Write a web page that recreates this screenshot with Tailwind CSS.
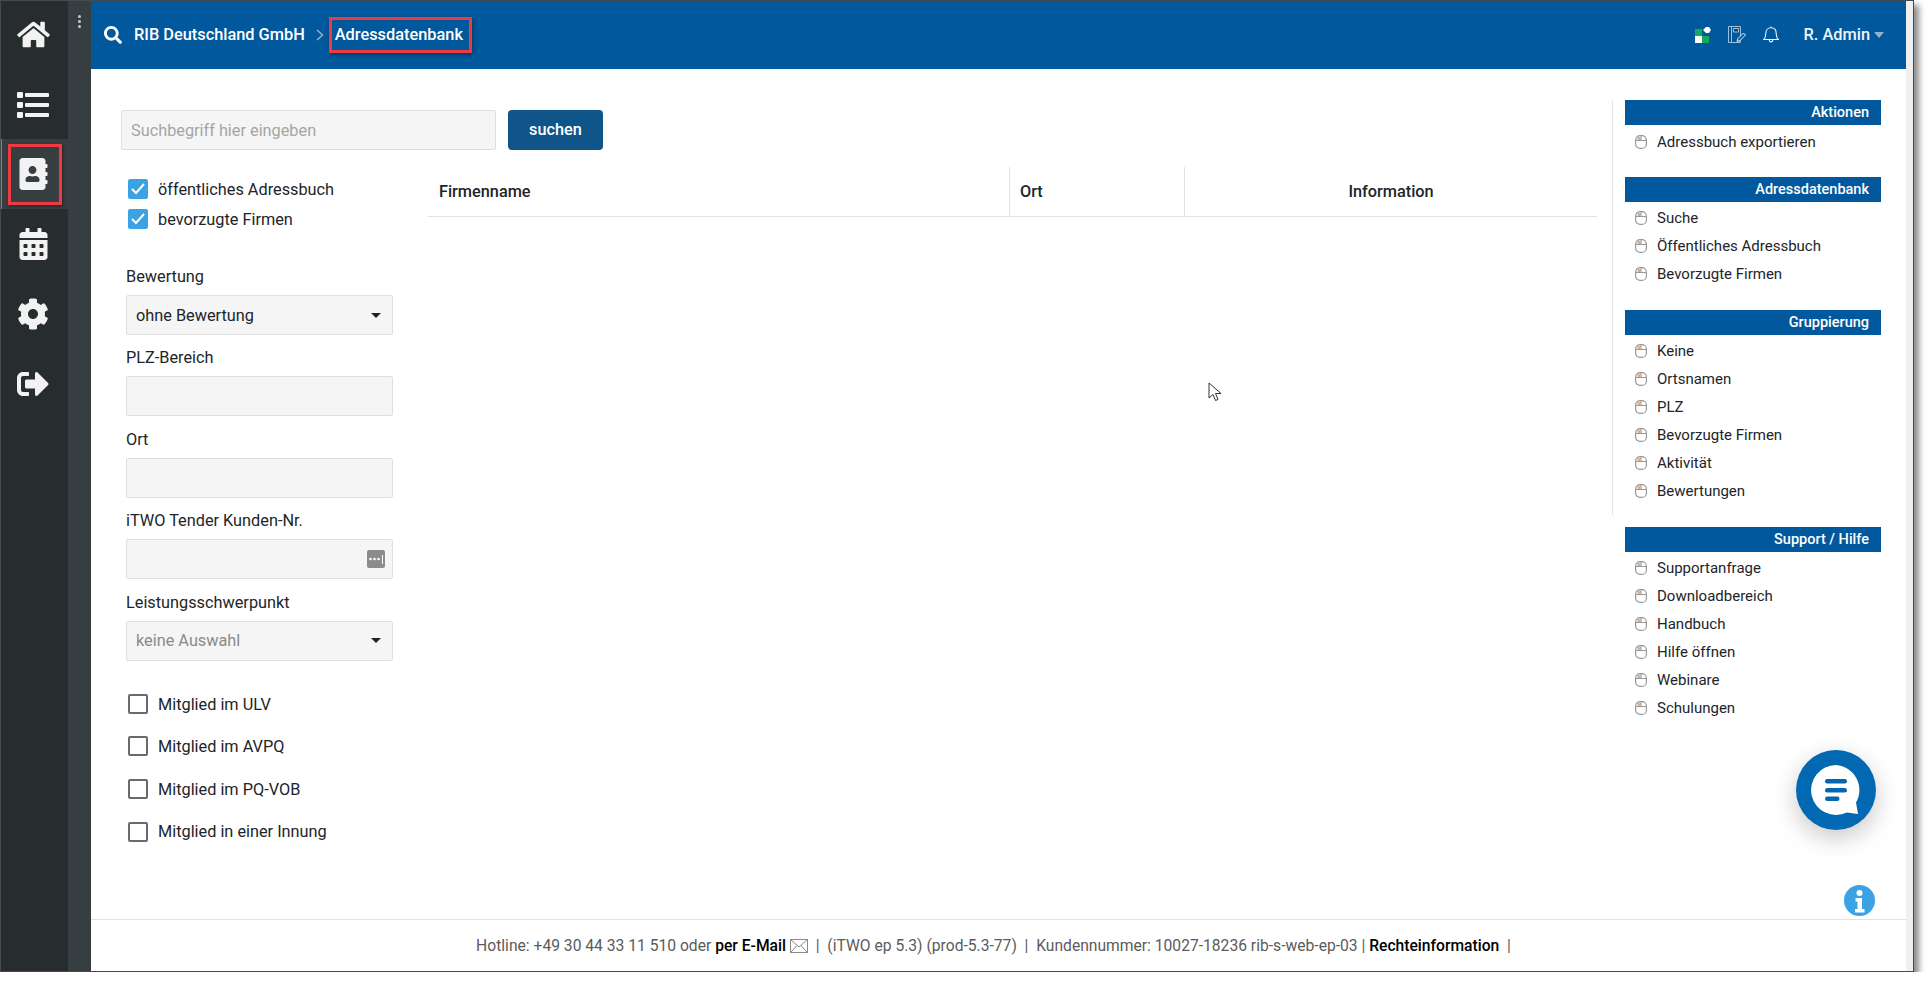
<!DOCTYPE html>
<html lang="de">
<head>
<meta charset="utf-8">
<script src="https://cdn.jsdelivr.net/npm/@tailwindcss/browser@4"></script>
<title>Adressdatenbank</title>
</head>
<body class="bg-white font-['Roboto',sans-serif] text-[#212529] overflow-hidden">
<div class="relative flex w-[1914px] h-[972px] border border-[#444a4d] shadow-[5px_5px_6px_rgba(0,0,0,0.45)]">

  <aside class="w-[67px] shrink-0 bg-[#272c2e] flex flex-col text-[#f2f2f2]">
    <div class="h-[69px] flex items-center justify-center pr-[3px] pb-[2px]">
      <svg class="w-[33px] h-[29px]" viewBox="0 0 576 512" fill="currentColor"><path d="M280.37 148.26L96 300.11V464a16 16 0 0 0 16 16l112.06-.29a16 16 0 0 0 15.92-16V368a16 16 0 0 1 16-16h64a16 16 0 0 1 16 16v95.64a16 16 0 0 0 16 16.05L464 480a16 16 0 0 0 16-16V300L295.67 148.26a12.19 12.19 0 0 0-15.3 0zM571.6 251.47L488 182.56V44.05a12 12 0 0 0-12-12h-56a12 12 0 0 0-12 12v72.61L318.47 43a48 48 0 0 0-61 0L4.34 251.47a12 12 0 0 0-1.6 16.9l25.5 31A12 12 0 0 0 45.15 301l235.22-193.74a12.19 12.19 0 0 1 15.3 0L530.9 301a12 12 0 0 0 16.9-1.6l25.5-31a12 12 0 0 0-1.7-16.93z"/></svg>
    </div>
    <div class="h-[69px] flex items-center justify-center pr-[3px]">
      <svg class="w-[32px] h-[26px]" viewBox="0 0 32 26" fill="currentColor"><rect x="0" y="0" width="6" height="6" rx="1"/><rect x="8" y="1" width="24" height="4" rx="1"/><rect x="0" y="10" width="6" height="6" rx="1"/><rect x="8" y="11" width="24" height="4" rx="1"/><rect x="0" y="20" width="6" height="6" rx="1"/><rect x="8" y="21" width="24" height="4" rx="1"/></svg>
    </div>
    <div class="relative h-[70px] bg-[#373e41] border-l border-[#4a90c4] flex items-center justify-center pr-[3px]">
      <svg class="w-[29px] h-[32px]" viewBox="0 0 448 512" fill="currentColor"><path d="M436 160c6.6 0 12-5.4 12-12v-40c0-6.6-5.4-12-12-12h-20V48c0-26.5-21.5-48-48-48H48C21.5 0 0 21.5 0 48v416c0 26.5 21.5 48 48 48h320c26.5 0 48-21.5 48-48v-48h20c6.6 0 12-5.4 12-12v-40c0-6.6-5.4-12-12-12h-20v-64h20c6.6 0 12-5.4 12-12v-40c0-6.6-5.4-12-12-12h-20v-64h20zm-228-32c35.3 0 64 28.7 64 64s-28.7 64-64 64-64-28.7-64-64 28.7-64 64-64zm112 236.8c0 10.6-10 19.2-22.4 19.2H118.4C106 384 96 375.4 96 364.8v-19.2c0-31.8 30.1-57.6 67.2-57.6h5c12.3 5.1 25.7 8 39.8 8s27.6-2.9 39.8-8h5c37.1 0 67.2 25.8 67.2 57.6v19.2z"/></svg>
      <div class="absolute left-[6px] top-[5px] w-[54px] h-[61px] border-[3px] border-[#f03a41] shadow-[1px_1px_3px_rgba(0,0,0,0.4)]"></div>
    </div>
    <div class="h-[70px] flex items-center justify-center pr-[2px]">
      <svg class="w-[29px] h-[32px]" viewBox="0 0 448 512" fill="currentColor"><path d="M0 464c0 26.5 21.5 48 48 48h352c26.5 0 48-21.5 48-48V192H0v272zm320-196c0-6.6 5.4-12 12-12h40c6.6 0 12 5.4 12 12v40c0 6.6-5.4 12-12 12h-40c-6.6 0-12-5.4-12-12v-40zm0 128c0-6.6 5.4-12 12-12h40c6.6 0 12 5.4 12 12v40c0 6.6-5.4 12-12 12h-40c-6.6 0-12-5.4-12-12v-40zM192 268c0-6.6 5.4-12 12-12h40c6.6 0 12 5.4 12 12v40c0 6.6-5.4 12-12 12h-40c-6.6 0-12-5.4-12-12v-40zm0 128c0-6.6 5.4-12 12-12h40c6.6 0 12 5.4 12 12v40c0 6.6-5.4 12-12 12h-40c-6.6 0-12-5.4-12-12v-40zM64 268c0-6.6 5.4-12 12-12h40c6.6 0 12 5.4 12 12v40c0 6.6-5.4 12-12 12H76c-6.6 0-12-5.4-12-12v-40zm0 128c0-6.6 5.4-12 12-12h40c6.6 0 12 5.4 12 12v40c0 6.6-5.4 12-12 12H76c-6.6 0-12-5.4-12-12v-40zM400 64h-48V16c0-8.8-7.2-16-16-16h-32c-8.8 0-16 7.2-16 16v48H160V16c0-8.8-7.2-16-16-16h-32c-8.8 0-16 7.2-16 16v48H48C21.5 64 0 85.5 0 112v48h448v-48c0-26.5-21.5-48-48-48z"/></svg>
    </div>
    <div class="h-[70px] flex items-center justify-center pr-[3px]">
      <svg class="w-[32px] h-[32px]" viewBox="0 0 512 512" fill="currentColor"><path d="M487.4 315.7l-42.6-24.6c4.3-23.2 4.3-47 0-70.2l42.6-24.6c4.9-2.8 7.1-8.6 5.5-14-11.1-35.6-30-67.8-54.7-94.6-3.8-4.1-10-5.1-14.8-2.3L380.8 110c-17.9-15.4-38.5-27.3-60.8-35.1V25.8c0-5.6-3.9-10.5-9.4-11.7-36.7-8.2-74.3-7.8-109.2 0-5.5 1.2-9.4 6.1-9.4 11.7V75c-22.2 7.9-42.8 19.8-60.8 35.1L88.7 85.5c-4.9-2.8-11-1.9-14.8 2.3-24.7 26.7-43.6 58.9-54.7 94.6-1.7 5.4.6 11.2 5.5 14L67.3 221c-4.3 23.2-4.3 47 0 70.2l-42.6 24.6c-4.9 2.8-7.1 8.6-5.5 14 11.1 35.6 30 67.8 54.7 94.6 3.8 4.1 10 5.1 14.8 2.3l42.6-24.6c17.9 15.4 38.5 27.3 60.8 35.1v49.2c0 5.6 3.9 10.5 9.4 11.7 36.7 8.2 74.3 7.8 109.2 0 5.5-1.2 9.4-6.1 9.4-11.7v-49.2c22.2-7.9 42.8-19.8 60.8-35.1l42.6 24.6c4.9 2.8 11 1.9 14.8-2.3 24.7-26.7 43.6-58.9 54.7-94.6 1.5-5.5-.7-11.3-5.6-14.1zM256 336c-44.1 0-80-35.9-80-80s35.9-80 80-80 80 35.9 80 80-35.9 80-80 80z"/></svg>
    </div>
    <div class="h-[70px] flex items-center justify-center pr-[3px]">
      <svg class="w-[32px] h-[32px]" viewBox="0 0 512 512" fill="currentColor"><path d="M497 273L329 441c-15 15-41 4.5-41-17v-96H152c-13.3 0-24-10.7-24-24v-96c0-13.3 10.7-24 24-24h136V88c0-21.4 25.9-32 41-17l168 168c9.3 9.4 9.3 24.6 0 34zM192 436v-40c0-6.6-5.4-12-12-12H96c-17.7 0-32-14.3-32-32V160c0-17.7 14.3-32 32-32h84c6.6 0 12-5.4 12-12V76c0-6.6-5.4-12-12-12H96c-53 0-96 43-96 96v192c0 53 43 96 96 96h84c6.6 0 12-5.4 12-12z"/></svg>
    </div>
    <div class="flex-1"></div>
  </aside>

  <div class="w-[23px] shrink-0 bg-[#373e41] flex flex-col items-center gap-[2px] pt-[14px] pr-[1px]">
    <span class="w-[3px] h-[3px] rounded-full bg-[#c9cccd]"></span>
    <span class="w-[3px] h-[3px] rounded-full bg-[#c9cccd]"></span>
    <span class="w-[3px] h-[3px] rounded-full bg-[#c9cccd]"></span>
  </div>

  <main class="w-[1815px] shrink-0 flex flex-col bg-white">
    <header class="h-[68px] shrink-0 bg-[#02589c] text-white flex items-center pl-[13px] pr-[22px]">
      <svg class="w-[18px] h-[18px]" viewBox="0 0 512 512" fill="currentColor"><path d="M505 442.7L405.3 343c-4.5-4.5-10.6-7-17-7H372c27.6-35.3 44-79.7 44-128C416 93.1 322.9 0 208 0S0 93.1 0 208s93.1 208 208 208c48.3 0 92.7-16.4 128-44v16.3c0 6.4 2.5 12.5 7 17l99.7 99.700c9.4 9.4 24.6 9.4 33.9 0l28.3-28.3c9.4-9.4 9.4-24.6.1-34zM208 336c-70.7 0-128-57.2-128-128 0-70.7 57.2-128 128-128 70.7 0 128 57.2 128 128 0 70.7-57.2 128-128 128z"/></svg>
      <span class="ml-[12px] text-[16.35px] font-medium">RIB Deutschland GmbH</span>
      <svg class="ml-[11px] w-[8px] h-[12px]" viewBox="0 0 8 12" fill="none" stroke="#8fb3d0" stroke-width="1.5"><path d="M1 1l5.5 5L1 11"/></svg>
      <span class="ml-[5px] h-[36px] pl-[3px] pr-[6px] flex items-center border-[3px] border-[#f03a41] shadow-[1px_2px_4px_rgba(0,0,0,0.35)] text-[16.35px] font-medium">Adressdatenbank</span>
      <div class="ml-auto flex items-center">
        <svg class="w-[16px] h-[16px]" viewBox="0 0 16 16"><rect x="0" y="2" width="7" height="7" fill="#15a95b"/><rect x="7" y="9" width="7" height="7" fill="#15a95b"/><rect x="0" y="9" width="7" height="7" fill="#fff"/><path d="M8 3l3-3h3l2 3-2 3h-3z" fill="#fff"/></svg>
        <svg class="ml-[17px] w-[18px] h-[17px]" viewBox="0 0 18 17" fill="none" stroke="#9fc0da" stroke-width="1"><path d="M.5.500h12v16H.5zM3.500.500v16"/><path d="M5.500 2.500h5v3.500h-5z" fill="#0c3f6e"/><path d="M9 15.500l1-3 5.500-5.500 2 2-5.500 5.500z" fill="#02589c" stroke="#e6eef5"/></svg>
        <svg class="ml-[17px] w-[16px] h-[17px]" viewBox="0 0 16 17" fill="none" stroke="#eef4f9" stroke-width="1.100"><path d="M.8 13.500c1.400-1.400 2-2.800 2-6 0-3.500 2.100-5.700 5.200-5.700s5.200 2.200 5.200 5.700c0 3.200.6 4.600 2 6z"/><path d="M8 .5v1.300M6.300 13.700c0 2.900 3.400 2.900 3.400 0"/></svg>
        <span class="ml-[25px] text-[16.35px] font-medium text-[#eef4f9]">R. Admin</span>
        <span class="ml-[4px] mt-[1px] w-0 h-0 border-x-[5.5px] border-x-transparent border-t-[6px] border-t-[#8fb3d0]"></span>
      </div>
    </header>

    <div class="flex-1 flex min-h-0">
      <section class="w-[1521px] shrink-0 pl-[30px] pt-[41px]">
        <div class="flex">
          <div class="w-[375px] h-[40px] bg-[#f5f5f5] border border-[#dfdfdf] rounded-[2px] flex items-center px-[9px] pt-[2px] text-[16.3px] text-[#a5a5a5]">Suchbegriff hier eingeben</div>
          <button class="ml-[12px] w-[95px] h-[40px] bg-[#0f5589] rounded-[4px] text-white text-[16.3px] font-medium">suchen</button>
        </div>
        <div class="flex mt-[17px]">
          <div class="w-[267px] ml-[5px] shrink-0 pt-[7px] text-[16.3px]">
            <label class="h-[30px] flex items-center pl-[2px]">
              <span class="w-[20px] h-[20px] rounded-[2px] bg-[#3ba3e4] flex items-center justify-center"><svg class="w-[14px] h-[12px]" viewBox="0 0 14 12" fill="none" stroke="#fff" stroke-width="2"><path d="M1 6l4 4 8-9"/></svg></span>
              <span class="ml-[10px] pt-[2px]">öffentliches Adressbuch</span>
            </label>
            <label class="h-[30px] flex items-center pl-[2px]">
              <span class="w-[20px] h-[20px] rounded-[2px] bg-[#3ba3e4] flex items-center justify-center"><svg class="w-[14px] h-[12px]" viewBox="0 0 14 12" fill="none" stroke="#fff" stroke-width="2"><path d="M1 6l4 4 8-9"/></svg></span>
              <span class="ml-[10px] pt-[2px]">bevorzugte Firmen</span>
            </label>
            <div class="h-[30px]"></div>
            <div class="h-[81.4px]">
              <div class="h-[24px] leading-[26px] mb-[7px]">Bewertung</div>
              <div class="h-[40px] bg-[#f5f5f5] border border-[#dfdfdf] rounded-[2px] flex items-center justify-between pl-[9px] pr-[11px]"><span class="pt-[2px]">ohne Bewertung</span><span class="w-0 h-0 border-x-[5px] border-x-transparent border-t-[5px] border-t-[#222]"></span></div>
            </div>
            <div class="h-[81.4px]">
              <div class="h-[24px] leading-[26px] mb-[7px]">PLZ-Bereich</div>
              <div class="h-[40px] bg-[#f5f5f5] border border-[#dfdfdf] rounded-[2px]"></div>
            </div>
            <div class="h-[81.4px]">
              <div class="h-[24px] leading-[26px] mb-[7px]">Ort</div>
              <div class="h-[40px] bg-[#f5f5f5] border border-[#dfdfdf] rounded-[2px]"></div>
            </div>
            <div class="h-[81.4px]">
              <div class="h-[24px] leading-[26px] mb-[7px]">iTWO Tender Kunden-Nr.</div>
              <div class="h-[40px] bg-[#f5f5f5] border border-[#dfdfdf] rounded-[2px] flex items-center justify-end pr-[7px]">
                <svg class="w-[18px] h-[18px]" viewBox="0 0 18 18"><rect width="18" height="18" rx="2" fill="#8c8c8c"/><circle cx="3.500" cy="9" r="1.300" fill="#fff"/><circle cx="7.500" cy="9" r="1.300" fill="#fff"/><circle cx="11.500" cy="9" r="1.300" fill="#fff"/><rect x="15" y="5" width="1" height="9" fill="#fff"/></svg>
              </div>
            </div>
            <div>
              <div class="h-[24px] leading-[26px] mb-[7px]">Leistungsschwerpunkt</div>
              <div class="h-[40px] bg-[#f5f5f5] border border-[#dfdfdf] rounded-[2px] flex items-center justify-between pl-[9px] pr-[11px] text-[#8a8a8a]"><span class="pt-[2px]">keine Auswahl</span><span class="w-0 h-0 border-x-[5px] border-x-transparent border-t-[5px] border-t-[#222]"></span></div>
            </div>
            <div class="mt-[22px]">
              <label class="h-[42.6px] flex items-center pl-[2px]"><span class="w-[20px] h-[20px] rounded-[2px] border-2 border-[#6a6a6a]"></span><span class="ml-[10px] pt-[2px]">Mitglied im ULV</span></label>
              <label class="h-[42.6px] flex items-center pl-[2px]"><span class="w-[20px] h-[20px] rounded-[2px] border-2 border-[#6a6a6a]"></span><span class="ml-[10px] pt-[2px]">Mitglied im AVPQ</span></label>
              <label class="h-[42.6px] flex items-center pl-[2px]"><span class="w-[20px] h-[20px] rounded-[2px] border-2 border-[#6a6a6a]"></span><span class="ml-[10px] pt-[2px]">Mitglied im PQ-VOB</span></label>
              <label class="h-[42.6px] flex items-center pl-[2px]"><span class="w-[20px] h-[20px] rounded-[2px] border-2 border-[#6a6a6a]"></span><span class="ml-[10px] pt-[2px]">Mitglied in einer Innung</span></label>
            </div>
          </div>
          <div class="ml-[35px] w-[1169px] shrink-0">
            <div class="h-[50px] flex border-b border-[#e2e2e2] text-[16.3px] font-medium">
              <div class="w-[582px] border-r border-[#e2e2e2] flex items-center pl-[11px] pt-[2px]">Firmenname</div>
              <div class="w-[175px] border-r border-[#e2e2e2] flex items-center pl-[10px] pt-[2px]">Ort</div>
              <div class="flex-1 flex items-center justify-center pt-[2px]">Information</div>
            </div>
          </div>
        </div>
      </section>

      <aside class="w-[270px] shrink-0 pt-[31px] text-[15px]">
        <div class="border-l border-[#e6e6e6] pl-[12px] h-[415px]">
          <div class="w-[256px] h-[25px] bg-[#02589c] text-white text-[14.5px] font-medium flex items-center justify-end pr-[12px]">Aktionen</div>
          <ul class="pt-[3px] mb-[21px]">
            <li class="h-[28px] flex items-center pl-[10px] gap-[10px]"><svg class="w-[12px] h-[14px] shrink-0" viewBox="0 0 12 14"><rect x="2.500" y="2" width="3" height="3" fill="#f3a976"/><rect x=".6" y=".6" width="10.800" height="12.800" rx="4.500" fill="none" stroke="#999" stroke-width="1.200"/><path d="M.6 5.500h10.800M6 .6v4.900" stroke="#999" stroke-width="1"/></svg>Adressbuch exportieren</li>
          </ul>
          <div class="w-[256px] h-[25px] bg-[#02589c] text-white text-[14.5px] font-medium flex items-center justify-end pr-[12px]">Adressdatenbank</div>
          <ul class="pt-[2px] mb-[22px]">
            <li class="h-[28px] flex items-center pl-[10px] gap-[10px]"><svg class="w-[12px] h-[14px] shrink-0" viewBox="0 0 12 14"><rect x="2.500" y="2" width="3" height="3" fill="#f3a976"/><rect x=".6" y=".6" width="10.800" height="12.800" rx="4.500" fill="none" stroke="#999" stroke-width="1.200"/><path d="M.6 5.500h10.800M6 .6v4.900" stroke="#999" stroke-width="1"/></svg>Suche</li>
            <li class="h-[28px] flex items-center pl-[10px] gap-[10px]"><svg class="w-[12px] h-[14px] shrink-0" viewBox="0 0 12 14"><rect x="2.500" y="2" width="3" height="3" fill="#f3a976"/><rect x=".6" y=".6" width="10.800" height="12.800" rx="4.500" fill="none" stroke="#999" stroke-width="1.200"/><path d="M.6 5.500h10.800M6 .6v4.900" stroke="#999" stroke-width="1"/></svg>Öffentliches Adressbuch</li>
            <li class="h-[28px] flex items-center pl-[10px] gap-[10px]"><svg class="w-[12px] h-[14px] shrink-0" viewBox="0 0 12 14"><rect x="2.500" y="2" width="3" height="3" fill="#f3a976"/><rect x=".6" y=".6" width="10.800" height="12.800" rx="4.500" fill="none" stroke="#999" stroke-width="1.200"/><path d="M.6 5.500h10.800M6 .6v4.900" stroke="#999" stroke-width="1"/></svg>Bevorzugte Firmen</li>
          </ul>
          <div class="w-[256px] h-[25px] bg-[#02589c] text-white text-[14.5px] font-medium flex items-center justify-end pr-[12px]">Gruppierung</div>
          <ul class="pt-[2px]">
            <li class="h-[28px] flex items-center pl-[10px] gap-[10px]"><svg class="w-[12px] h-[14px] shrink-0" viewBox="0 0 12 14"><rect x="2.500" y="2" width="3" height="3" fill="#f3a976"/><rect x=".6" y=".6" width="10.800" height="12.800" rx="4.500" fill="none" stroke="#999" stroke-width="1.200"/><path d="M.6 5.500h10.800M6 .6v4.900" stroke="#999" stroke-width="1"/></svg>Keine</li>
            <li class="h-[28px] flex items-center pl-[10px] gap-[10px]"><svg class="w-[12px] h-[14px] shrink-0" viewBox="0 0 12 14"><rect x="2.500" y="2" width="3" height="3" fill="#f3a976"/><rect x=".6" y=".6" width="10.800" height="12.800" rx="4.500" fill="none" stroke="#999" stroke-width="1.200"/><path d="M.6 5.500h10.800M6 .6v4.900" stroke="#999" stroke-width="1"/></svg>Ortsnamen</li>
            <li class="h-[28px] flex items-center pl-[10px] gap-[10px]"><svg class="w-[12px] h-[14px] shrink-0" viewBox="0 0 12 14"><rect x="2.500" y="2" width="3" height="3" fill="#f3a976"/><rect x=".6" y=".6" width="10.800" height="12.800" rx="4.500" fill="none" stroke="#999" stroke-width="1.200"/><path d="M.6 5.500h10.800M6 .6v4.900" stroke="#999" stroke-width="1"/></svg>PLZ</li>
            <li class="h-[28px] flex items-center pl-[10px] gap-[10px]"><svg class="w-[12px] h-[14px] shrink-0" viewBox="0 0 12 14"><rect x="2.500" y="2" width="3" height="3" fill="#f3a976"/><rect x=".6" y=".6" width="10.800" height="12.800" rx="4.500" fill="none" stroke="#999" stroke-width="1.200"/><path d="M.6 5.500h10.800M6 .6v4.900" stroke="#999" stroke-width="1"/></svg>Bevorzugte Firmen</li>
            <li class="h-[28px] flex items-center pl-[10px] gap-[10px]"><svg class="w-[12px] h-[14px] shrink-0" viewBox="0 0 12 14"><rect x="2.500" y="2" width="3" height="3" fill="#f3a976"/><rect x=".6" y=".6" width="10.800" height="12.800" rx="4.500" fill="none" stroke="#999" stroke-width="1.200"/><path d="M.6 5.500h10.800M6 .6v4.900" stroke="#999" stroke-width="1"/></svg>Aktivität</li>
            <li class="h-[28px] flex items-center pl-[10px] gap-[10px]"><svg class="w-[12px] h-[14px] shrink-0" viewBox="0 0 12 14"><rect x="2.500" y="2" width="3" height="3" fill="#f3a976"/><rect x=".6" y=".6" width="10.800" height="12.800" rx="4.500" fill="none" stroke="#999" stroke-width="1.200"/><path d="M.6 5.500h10.800M6 .6v4.900" stroke="#999" stroke-width="1"/></svg>Bewertungen</li>
          </ul>
        </div>
        <div class="ml-[13px] mt-[12px]">
          <div class="w-[256px] h-[25px] bg-[#02589c] text-white text-[14.5px] font-medium flex items-center justify-end pr-[12px]">Support / Hilfe</div>
          <ul class="pt-[2px]">
            <li class="h-[28px] flex items-center pl-[10px] gap-[10px]"><svg class="w-[12px] h-[14px] shrink-0" viewBox="0 0 12 14"><rect x="2.500" y="2" width="3" height="3" fill="#f3a976"/><rect x=".6" y=".6" width="10.800" height="12.800" rx="4.500" fill="none" stroke="#999" stroke-width="1.200"/><path d="M.6 5.500h10.800M6 .6v4.900" stroke="#999" stroke-width="1"/></svg>Supportanfrage</li>
            <li class="h-[28px] flex items-center pl-[10px] gap-[10px]"><svg class="w-[12px] h-[14px] shrink-0" viewBox="0 0 12 14"><rect x="2.500" y="2" width="3" height="3" fill="#f3a976"/><rect x=".6" y=".6" width="10.800" height="12.800" rx="4.500" fill="none" stroke="#999" stroke-width="1.200"/><path d="M.6 5.500h10.800M6 .6v4.900" stroke="#999" stroke-width="1"/></svg>Downloadbereich</li>
            <li class="h-[28px] flex items-center pl-[10px] gap-[10px]"><svg class="w-[12px] h-[14px] shrink-0" viewBox="0 0 12 14"><rect x="2.500" y="2" width="3" height="3" fill="#f3a976"/><rect x=".6" y=".6" width="10.800" height="12.800" rx="4.500" fill="none" stroke="#999" stroke-width="1.200"/><path d="M.6 5.500h10.800M6 .6v4.900" stroke="#999" stroke-width="1"/></svg>Handbuch</li>
            <li class="h-[28px] flex items-center pl-[10px] gap-[10px]"><svg class="w-[12px] h-[14px] shrink-0" viewBox="0 0 12 14"><rect x="2.500" y="2" width="3" height="3" fill="#f3a976"/><rect x=".6" y=".6" width="10.800" height="12.800" rx="4.500" fill="none" stroke="#999" stroke-width="1.200"/><path d="M.6 5.500h10.800M6 .6v4.900" stroke="#999" stroke-width="1"/></svg>Hilfe öffnen</li>
            <li class="h-[28px] flex items-center pl-[10px] gap-[10px]"><svg class="w-[12px] h-[14px] shrink-0" viewBox="0 0 12 14"><rect x="2.500" y="2" width="3" height="3" fill="#f3a976"/><rect x=".6" y=".6" width="10.800" height="12.800" rx="4.500" fill="none" stroke="#999" stroke-width="1.200"/><path d="M.6 5.500h10.800M6 .6v4.900" stroke="#999" stroke-width="1"/></svg>Webinare</li>
            <li class="h-[28px] flex items-center pl-[10px] gap-[10px]"><svg class="w-[12px] h-[14px] shrink-0" viewBox="0 0 12 14"><rect x="2.500" y="2" width="3" height="3" fill="#f3a976"/><rect x=".6" y=".6" width="10.800" height="12.800" rx="4.500" fill="none" stroke="#999" stroke-width="1.200"/><path d="M.6 5.500h10.800M6 .6v4.900" stroke="#999" stroke-width="1"/></svg>Schulungen</li>
          </ul>
        </div>
      </aside>
    </div>

    <footer class="h-[52px] shrink-0 border-t border-[#e2e2e2] flex items-center justify-center pr-[10px] text-[15.65px] text-[#5b5b5b]">
      <span>Hotline: +49 30 44 33 11 510 oder&nbsp;</span><span class="font-medium text-black">per E-Mail</span>
      <svg class="ml-[4px] w-[18px] h-[14px]" viewBox="0 0 18 14" fill="none" stroke="#8a8a8a"><path d="M.5.500h17v13H.5zM.5.500L9 8l8.500-7.500M.5 13.500L7 6.500M17.500 13.500L11 6.500"/></svg>
      <span class="whitespace-pre">  |  (iTWO ep 5.3) (prod-5.3-77)  |  Kundennummer: 10027-18236 rib-s-web-ep-03 | </span><span class="font-medium text-black">Rechteinformation</span><span class="whitespace-pre">  |</span>
    </footer>
  </main>

  <div class="w-[7px] shrink-0 bg-[#f0f0f0]"></div>

  <div class="absolute left-[1795px] top-[749px] w-[80px] h-[80px] rounded-full bg-[#0268b1] shadow-[0_8px_24px_rgba(0,0,0,0.22)] flex items-center justify-center">
    <svg class="w-[50px] h-[50px]" viewBox="0 0 50 50"><path d="M25 0a25 25 0 1 0 11 47.500l11 1.500-2-11.500A25 25 0 0 0 25 0z" fill="#fff"/><rect x="14" y="14" width="22" height="4.500" rx="2.200" fill="#0268b1"/><rect x="14" y="23" width="22" height="4.500" rx="2.200" fill="#0268b1"/><rect x="14" y="31.500" width="14.500" height="4.500" rx="2.200" fill="#0268b1"/></svg>
  </div>
  <svg class="absolute left-[1843px] top-[884px] w-[31px] h-[31px]" viewBox="0 0 31 31"><circle cx="15.500" cy="15.500" r="15.500" fill="#3ba3e4"/><circle cx="15.500" cy="8" r="3" fill="#fff"/><path d="M11.500 13h6.500v11h2.500v3.500h-9.500V24h2.500v-7.500h-2z" fill="#fff"/></svg>
  <svg class="absolute left-[1207px] top-[381px] w-[14px] h-[21px]" viewBox="0 0 14 21"><path d="M1 1v15l4-3.500 2.500 6 2.500-1-2.500-6H13z" fill="#fff" stroke="#333" stroke-width="1"/></svg>
</div>
</body>
</html>
